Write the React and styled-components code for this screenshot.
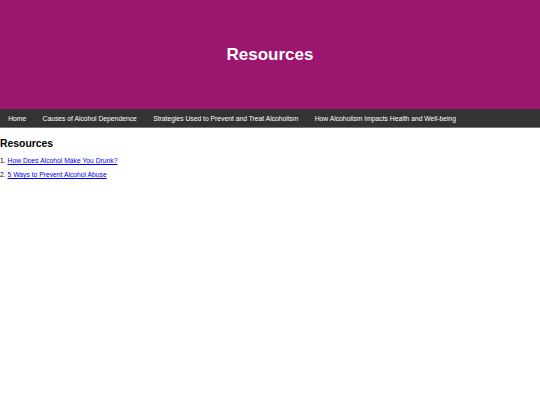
import React from 'react';
import styled, { createGlobalStyle } from 'styled-components';

const GlobalStyle = createGlobalStyle`
  body {
    margin: 0;
    background: #ffffff;
    font-family: 'Liberation Sans', Arial, sans-serif;
    font-size: 6.75px;
    color: #000000;
  }
`;

const Header = styled.header`
  height: 109px;
  background-color: #9c166f;
  display: flex;
  justify-content: center;
  align-items: center;
`;

const Title = styled.h1`
  margin: 0;
  color: #ffffff;
  font-size: 17px;
  font-weight: bold;
`;

const Nav = styled.nav`
  display: flex;
  height: 18px;
  background-color: #333333;
  border-bottom: 1px solid #777777;
`;

const NavLink = styled.a`
  display: flex;
  align-items: center;
  padding: 0 8.2px;
  color: #ffffff;
  text-decoration: none;
  font-size: 6.75px;
`;

const Main = styled.main`
  padding: 0;
`;

const Heading = styled.h2`
  margin: 10px 0 8px;
  font-size: 10.4px;
  font-weight: bold;
`;

const List = styled.ol`
  margin: 0;
  padding: 0;
  list-style-position: inside;
`;

const Item = styled.li`
  line-height: 8px;
  margin-bottom: 6px;
`;

const Link = styled.a`
  color: #0000ee;
  text-decoration: underline;
`;

const navItems = [
  'Home',
  'Causes of Alcohol Dependence',
  'Strategies Used to Prevent and Treat Alcoholism',
  'How Alcoholism Impacts Health and Well-being',
];

const resources = [
  'How Does Alcohol Make You Drunk?',
  '5 Ways to Prevent Alcohol Abuse',
];

const App = () => {
  return (
    <>
      <GlobalStyle />
      <Header>
        <Title>Resources</Title>
      </Header>
      <Nav>
        {navItems.map((item) => (
          <NavLink key={item} href="#">{item}</NavLink>
        ))}
      </Nav>
      <Main>
        <Heading>Resources</Heading>
        <List>
          {resources.map((r) => (
            <Item key={r}>
              <Link href="#">{r}</Link>
            </Item>
          ))}
        </List>
      </Main>
    </>
  );
};

export default App;
